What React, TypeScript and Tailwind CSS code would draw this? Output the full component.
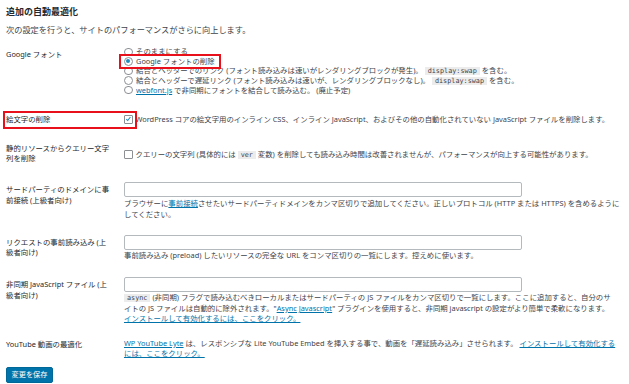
function Radio({ checked }: { checked?: boolean }) {
  return (
    <span className="inline-flex h-[8.5px] w-[8.5px] shrink-0 items-center justify-center rounded-full border border-[#8c8f94] bg-white">
      {checked && <span className="h-[4px] w-[4px] rounded-full bg-[#1e8cbe]" />}
    </span>
  );
}

function Checkbox({ checked }: { checked?: boolean }) {
  return (
    <span className="inline-flex h-[8.5px] w-[8.5px] shrink-0 items-center justify-center rounded-[1px] border border-[#8c8f94] bg-white">
      {checked && (
        <svg viewBox="0 0 10 10" className="h-[8px] w-[8px]">
          <path d="M2 5.2 L4.2 7.4 L8.3 2" fill="none" stroke="#1e8cbe" strokeWidth="1.6" />
        </svg>
      )}
    </span>
  );
}

function Code({ children }: { children: string }) {
  return (
    <code className="bg-[#ececec] px-[3px] font-['DejaVu_Sans_Mono','Liberation_Mono',monospace] text-[6.8px] text-[#3c434a]">
      {children}
    </code>
  );
}

function A({ children }: { children: string }) {
  return <a className="text-[#0073aa] underline">{children}</a>;
}

export default function App() {
  return (
    <div className="h-[384px] w-[629px] overflow-hidden bg-white px-[6px] pt-[6px] font-['Noto_Sans','Noto_Sans_CJK_JP',sans-serif] text-[7.4px] text-[#3c434a]">
      <h2 className="text-[9px] font-bold leading-[12px] text-[#23282d]">追加の自動最適化</h2>
      <p className="mt-[6px] text-[8.2px] leading-[12px]">
        次の設定を行うと、サイトのパフォーマンスがさらに向上します。
      </p>

      {/* Google fonts */}
      <div className="mt-[11px] flex">
        <div className="w-[118px] shrink-0 pt-[2px] leading-[10px] text-[#23282d]">Google フォント</div>
        <div className="flex flex-col">
          <div className="flex h-[9.6px] items-center gap-[3.5px] whitespace-nowrap">
            <Radio />
            <span>そのままにする</span>
          </div>
          <div className="relative flex h-[9.6px] items-center gap-[3.5px] whitespace-nowrap">
            <Radio checked />
            <span>Google フォントの削除</span>
            <div className="absolute -left-[5px] -top-[3px] h-[15px] w-[102px] border-2 border-[#e8101b]" />
          </div>
          <div className="flex h-[9.6px] items-center gap-[3.5px] whitespace-nowrap">
            <Radio />
            <span>
              結合とヘッダーでのリンク (フォント読み込みは速いがレンダリングブロックが発生)。 <Code>display:swap</Code> を含む。
            </span>
          </div>
          <div className="flex h-[9.6px] items-center gap-[3.5px] whitespace-nowrap">
            <Radio />
            <span>
              結合とヘッダーで遅延リンク (フォント読み込みは速いが、レンダリングブロックなし)。 <Code>display:swap</Code> を含む。
            </span>
          </div>
          <div className="flex h-[9.6px] items-center gap-[3.5px] whitespace-nowrap">
            <Radio />
            <span>
              <A>webfont.js</A> で非同期にフォントを結合して読み込む。 (廃止予定)
            </span>
          </div>
        </div>
      </div>

      {/* Emoji */}
      <div className="relative mt-[19px] flex">
        <div className="w-[118px] shrink-0 leading-[10.6px] text-[#23282d]">絵文字の削除</div>
        <div className="flex items-center gap-[3px] whitespace-nowrap leading-[10.6px]">
          <Checkbox checked />
          <span>
            WordPress コアの絵文字用のインライン CSS、インライン JavaScript、およびその他の自動化されていない JavaScript ファイルを削除します。
          </span>
        </div>
        <div className="absolute -left-[3px] -top-[3px] h-[18px] w-[134px] border-2 border-[#e8101b]" />
      </div>

      {/* Query strings */}
      <div className="mt-[18px] flex">
        <div className="w-[118px] shrink-0 leading-[10.6px] text-[#23282d]">
          静的リソースからクエリー文字
          <br />
          列を削除
        </div>
        <div className="flex items-center gap-[3px] self-start whitespace-nowrap pt-[6px] leading-[10.6px]">
          <Checkbox />
          <span>
            クエリーの文字列 (具体的には <Code>ver</Code> 変数) を削除しても読み込み時間は改善されませんが、パフォーマンスが向上する可能性があります。
          </span>
        </div>
      </div>

      {/* Preconnect */}
      <div className="mt-[18px] flex">
        <div className="w-[118px] shrink-0 pt-[2.7px] leading-[10.6px] text-[#23282d]">
          サードパーティのドメインに事
          <br />
          前接続 (上級者向け)
        </div>
        <div className="w-[497px]">
          <div className="h-[15px] w-[398px] rounded-[2px] border border-[#b4b9be] bg-white" />
          <p className="mt-[1px] leading-[11px]">
            ブラウザーに<A>事前接続</A>させたいサードパーティドメインをカンマ区切りで追加してください。正しいプロトコル (HTTP または HTTPS) を含めるようにしてください。
          </p>
        </div>
      </div>

      {/* Preload */}
      <div className="mt-[15px] flex">
        <div className="w-[118px] shrink-0 pt-[2px] leading-[10.6px] text-[#23282d]">
          リクエストの事前読み込み (上
          <br />
          級者向け)
        </div>
        <div className="w-[497px]">
          <div className="h-[15px] w-[398px] rounded-[2px] border border-[#b4b9be] bg-white" />
          <p className="leading-[11px]">
            事前読み込み (preload) したいリソースの完全な URL をコンマ区切りの一覧にします。控えめに使います。
          </p>
        </div>
      </div>

      {/* Async JS */}
      <div className="mt-[16px] flex">
        <div className="w-[118px] shrink-0 pt-[2.7px] leading-[10.6px] text-[#23282d]">
          非同期 JavaScript ファイル (上
          <br />
          級者向け)
        </div>
        <div className="w-[492px]">
          <div className="h-[15px] w-[398px] rounded-[2px] border border-[#b4b9be] bg-white" />
          <p className="leading-[10px]">
            <Code>async</Code> (非同期) フラグで読み込むべきローカルまたはサードパーティの JS ファイルをカンマ区切りで一覧にします。ここに追加すると、自分のサイトの JS ファイルは自動的に除外されます。"<A>Async Javascript</A>" プラグインを使用すると、非同期 javascript の設定がより簡単で柔軟になります。
            <br />
            <A>インストールして有効化するには、ここをクリック。</A>
          </p>
        </div>
      </div>

      {/* YouTube */}
      <div className="mt-[15px] flex">
        <div className="w-[118px] shrink-0 pt-[1px] leading-[10.6px] text-[#23282d]">YouTube 動画の最適化</div>
        <div className="w-[492px]">
          <p className="leading-[10px]">
            <A>WP YouTube Lyte</A> は、レスポンシブな Lite YouTube Embed を挿入する事で、動画を「遅延読み込み」させられます。 <A>インストールして有効化するには、ここをクリック。</A>
          </p>
        </div>
      </div>

      <button className="mt-[9px] flex h-[16px] w-[47px] items-center justify-center rounded-[2px] border border-[#006799] bg-[#0073aa] text-[7.2px] text-white">
        変更を保存
      </button>
    </div>
  );
}
